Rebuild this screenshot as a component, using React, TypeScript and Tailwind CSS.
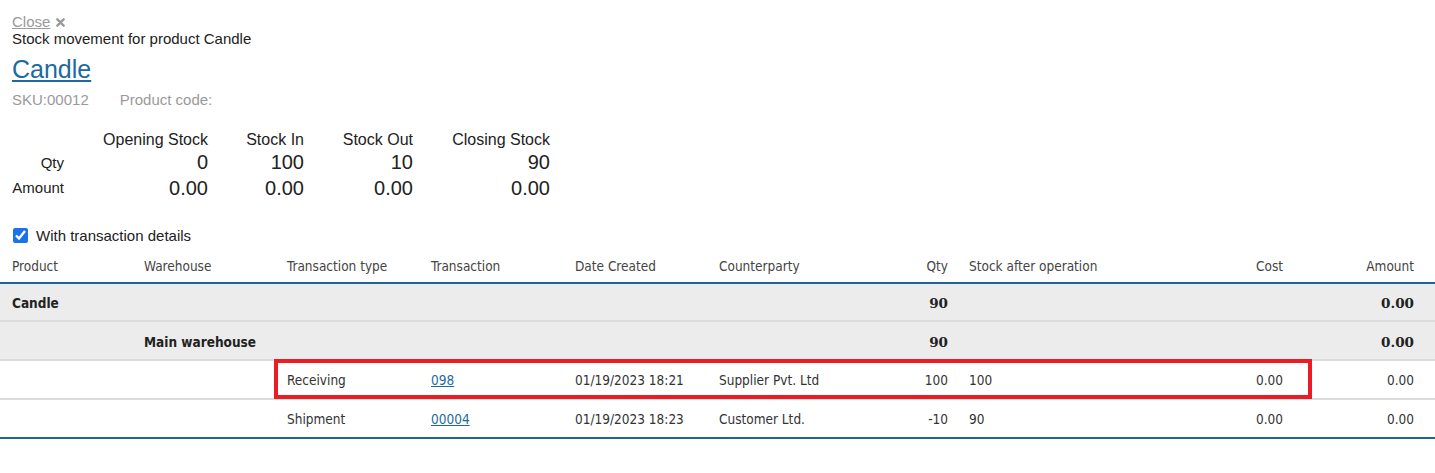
import React from "react";

const summary = [
  { label: "Opening Stock", qty: "0", amount: "0.00", w: "w-[144px]" },
  { label: "Stock In", qty: "100", amount: "0.00", w: "w-[96px]" },
  { label: "Stock Out", qty: "10", amount: "0.00", w: "w-[109px]" },
  { label: "Closing Stock", qty: "90", amount: "0.00", w: "w-[137px]" },
];

const rows = [
  { type: "Receiving", tx: "098", date: "01/19/2023 18:21", party: "Supplier Pvt. Ltd", qty: "100", after: "100", cost: "0.00", amount: "0.00" },
  { type: "Shipment", tx: "00004", date: "01/19/2023 18:23", party: "Customer Ltd.", qty: "-10", after: "90", cost: "0.00", amount: "0.00" },
];

export default function App() {
  return (
    <div className="w-[1435px] h-[473px] bg-white font-['Liberation_Sans',Arial,sans-serif] text-[#333]">
      <div className="px-3 pt-[13px]">
        <div className="flex items-center gap-[6px] text-[15px] leading-[17px] text-[#999]">
          <span className="underline">Close</span>
          <svg width="9" height="9" viewBox="0 0 10 10" className="mt-[2px]">
            <path d="M1.5 1.5 L8.5 8.5 M8.5 1.5 L1.5 8.5" stroke="#999" strokeWidth="2.6" strokeLinecap="round" />
          </svg>
        </div>
        <div className="text-[15px] leading-[18px] text-[#222]">Stock movement for product Candle</div>
        <div className="mt-[6px] text-[25px] leading-[30px] text-[#1c6aa0] underline">Candle</div>
        <div className="mt-[7px] flex gap-[31px] text-[15px] leading-[18px] text-[#9a9a9a]">
          <span>SKU:00012</span>
          <span>Product code:</span>
        </div>
      </div>

      <div className="mt-[21px] flex text-[#222]">
        <div className="w-[64px] flex flex-col items-end text-[15px]">
          <div className="h-[20px]" />
          <div className="h-[24px] leading-[26px]">Qty</div>
          <div className="h-[26px] leading-[28px]">Amount</div>
        </div>
        {summary.map((s) => (
          <div key={s.label} className={`${s.w} flex flex-col items-end`}>
            <div className="h-[20px] text-[16px] leading-[20px]">{s.label}</div>
            <div className="h-[24px] text-[20px] leading-[24px]">{s.qty}</div>
            <div className="h-[26px] text-[20px] leading-[28px]">{s.amount}</div>
          </div>
        ))}
      </div>

      <div className="mt-[27px] pl-[13px] flex items-center gap-[8px] text-[15px] text-[#222] leading-[17px]">
        <input type="checkbox" defaultChecked className="w-[15px] h-[15px] m-0 accent-[#1a73e8]" />
        <span>With transaction details</span>
      </div>

      <div className="relative mt-[6px] font-['DejaVu_Sans_Condensed','DejaVu_Sans',sans-serif] text-[13.5px] text-[#333]">
        <table className="w-[1435px] table-fixed border-collapse">
          <colgroup>
            <col className="w-[132px]" />
            <col className="w-[143px]" />
            <col className="w-[144px]" />
            <col className="w-[144px]" />
            <col className="w-[144px]" />
            <col className="w-[144px]" />
            <col className="w-[106px]" />
            <col className="w-[200px]" />
            <col className="w-[138px]" />
            <col className="w-[140px]" />
          </colgroup>
          <thead>
            <tr className="h-[33px] border-b-2 border-[#1f6496] text-[#444]">
              <th className="pl-3 text-left font-normal">Product</th>
              <th className="pl-3 text-left font-normal">Warehouse</th>
              <th className="pl-3 text-left font-normal">Transaction type</th>
              <th className="pl-3 text-left font-normal">Transaction</th>
              <th className="pl-3 text-left font-normal">Date Created</th>
              <th className="pl-3 text-left font-normal">Counterparty</th>
              <th className="pr-[9px] text-right font-normal">Qty</th>
              <th className="pl-3 text-left font-normal">Stock after operation</th>
              <th className="pr-3 text-right font-normal">Cost</th>
              <th className="pr-[21px] text-right font-normal">Amount</th>
            </tr>
          </thead>
          <tbody>
            <tr className="h-[38px] bg-[#ececec] border-b-2 border-[#dcdcdc] font-bold text-[#222]">
              <td className="pl-3 pt-[3px]">Candle</td>
              <td colSpan={5} />
              <td className="pr-[9px] pt-[3px] text-right font-['DejaVu_Serif',serif]">90</td>
              <td colSpan={2} />
              <td className="pr-[21px] pt-[3px] text-right font-['DejaVu_Serif',serif]">0.00</td>
            </tr>
            <tr className="h-[39px] bg-[#ececec] border-b-2 border-[#dcdcdc] font-bold text-[#222]">
              <td />
              <td className="pl-3 pt-[3px]">Main warehouse</td>
              <td colSpan={4} />
              <td className="pr-[9px] pt-[3px] text-right font-['DejaVu_Serif',serif]">90</td>
              <td colSpan={2} />
              <td className="pr-[21px] pt-[3px] text-right font-['DejaVu_Serif',serif]">0.00</td>
            </tr>
            {rows.map((r, i) => (
              <tr
                key={r.tx}
                className={`h-[39px] ${i === rows.length - 1 ? "border-b-2 border-[#1f6496]" : "border-b-2 border-[#dcdcdc]"}`}
              >
                <td />
                <td />
                <td className="pl-3 pt-[2px]">{r.type}</td>
                <td className="pl-3 pt-[2px]">
                  <span className="text-[#1c6aa0] underline">{r.tx}</span>
                </td>
                <td className="pl-3 pt-[2px]">{r.date}</td>
                <td className="pl-3 pt-[2px]">{r.party}</td>
                <td className="pr-[9px] pt-[2px] text-right">{r.qty}</td>
                <td className="pl-3 pt-[2px]">{r.after}</td>
                <td className="pr-3 pt-[2px] text-right">{r.cost}</td>
                <td className="pr-[21px] pt-[2px] text-right">{r.amount}</td>
              </tr>
            ))}
          </tbody>
        </table>
        {/* highlight box over the receiving row */}
        <div className="pointer-events-none absolute left-[274px] top-[109px] w-[1038px] h-[40px] border-4 border-[#ec1c24]" />
      </div>
    </div>
  );
}
